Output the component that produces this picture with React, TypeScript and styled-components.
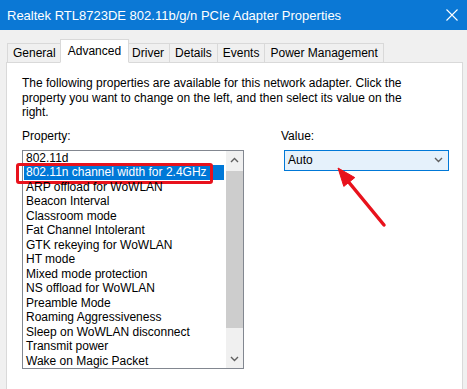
import React from 'react'
import styled, { createGlobalStyle } from 'styled-components'

const GlobalStyle = createGlobalStyle`
    html, body {
        margin: 0;
        padding: 0;
        width: 467px;
        height: 389px;
        overflow: hidden;
        background: #f0f0f0;
    }
    body {
        font-family: "Liberation Sans", Arial, sans-serif;
        color: #000;
    }
`

const Window = styled.div`
    width: 467px;
    height: 389px;
    display: flex;
    flex-direction: column;
    background: #f0f0f0;
    overflow: hidden;
`

const TitleBar = styled.div`
    height: 30px;
    flex-shrink: 0;
    background: #0b78d5;
    color: #fff;
    display: flex;
    align-items: center;
    justify-content: space-between;
    padding: 0 7px 0 7px;
    font-size: 13px;
`

const CloseButton = styled.div`
    width: 14px;
    height: 14px;
    display: flex;
    align-items: center;
    justify-content: center;
    margin-right: 1px;
`

const Body = styled.div`
    flex: 1;
    display: flex;
    flex-direction: column;
    padding: 9px 4px 0 6px;
`

const TabRow = styled.div`
    display: flex;
    align-items: flex-end;
    height: 24px;
    padding-left: 1px;
    position: relative;
    z-index: 1;
    margin-bottom: -1px;
`

const Tab = styled.div<{ $active?: boolean }>`
    font-size: 12px;
    line-height: ${p => (p.$active ? '22px' : '19px')};
    height: ${p => (p.$active ? '24px' : '20px')};
    box-sizing: border-box;
    padding: 0 ${p => (p.$active ? '7px' : '5px')};
    margin: 0 ${p => (p.$active ? '-2px' : '0')};
    background: ${p => (p.$active ? '#fff' : '#f0f0f0')};
    border: 1px solid #d9d9d9;
    border-bottom: ${p => (p.$active ? '1px solid #fff' : '1px solid #d9d9d9')};
    border-left: ${p => (p.$active ? '1px solid #d9d9d9' : 'none')};
    position: relative;
    z-index: ${p => (p.$active ? 2 : 0)};

    &:first-child {
        border-left: 1px solid #d9d9d9;
    }
`

const Panel = styled.div`
    flex: 1;
    position: relative;
    background: #fff;
    border: 1px solid #d9d9d9;
    border-bottom: none;
    padding: 13px 15px 0 15px;
    font-size: 12px;
`

const Description = styled.p`
    margin: 0;
    line-height: 14.5px;
    width: 400px;
`

const Columns = styled.div`
    display: grid;
    grid-template-columns: 222px 168px;
    column-gap: 37px;
    margin-top: 9px;
`

const Label = styled.div`
    line-height: 14px;
    margin-bottom: 7px;
`

const ListBox = styled.div`
    height: 219px;
    box-sizing: border-box;
    border: 1px solid #828790;
    display: flex;
`

const Items = styled.div`
    flex: 1;
    padding: 0 2px 0 1px;
`

const Item = styled.div<{ $selected?: boolean }>`
    position: relative;
    height: 14.5px;
    line-height: 14.5px;
    padding-left: 2px;
    white-space: nowrap;
    background: ${p => (p.$selected ? '#0078d7' : 'transparent')};
    color: ${p => (p.$selected ? '#fff' : '#000')};
`

const Callout = styled.div`
    position: absolute;
    left: -8px;
    top: -2px;
    width: 197px;
    height: 21px;
    box-sizing: border-box;
    border: 3px solid #e8121c;
    border-radius: 3px;
`

const ScrollBar = styled.div`
    width: 17px;
    background: #f0f0f0;
    display: flex;
    flex-direction: column;
`

const ScrollButton = styled.div`
    height: 18px;
    display: flex;
    align-items: center;
    justify-content: center;
`

const Track = styled.div`
    flex: 1;
    padding-top: 2px;
`

const Thumb = styled.div`
    height: 157px;
    background: #cdcdcd;
`

const Combo = styled.div`
    margin-left: 3px;
    height: 21px;
    box-sizing: border-box;
    border: 1px solid #0078d7;
    background: #e5f1fb;
    display: flex;
    align-items: center;
    justify-content: space-between;
    padding: 0 5px 0 3px;
`

const Annotation = styled.svg`
    position: absolute;
    left: 323px;
    top: 97px;
`

const Chevron = ({ up }: { up?: boolean }) => (
    <svg width="9" height="6" viewBox="0 0 9 6">
        <path
            d={up ? 'M1 5 L4.5 1.5 L8 5' : 'M1 1 L4.5 4.5 L8 1'}
            fill="none"
            stroke="#606060"
            strokeWidth="1.4"
        />
    </svg>
)

const properties = [
    '802.11d',
    '802.11n channel width for 2.4GHz',
    'ARP offload for WoWLAN',
    'Beacon Interval',
    'Classroom mode',
    'Fat Channel Intolerant',
    'GTK rekeying for WoWLAN',
    'HT mode',
    'Mixed mode protection',
    'NS offload for WoWLAN',
    'Preamble Mode',
    'Roaming Aggressiveness',
    'Sleep on WoWLAN disconnect',
    'Transmit power',
    'Wake on Magic Packet',
]

const tabs = ['General', 'Advanced', 'Driver', 'Details', 'Events', 'Power Management']

export default function App() {
    return (
        <Window>
            <GlobalStyle />
            <TitleBar>
                <span>Realtek RTL8723DE 802.11b/g/n PCIe Adapter Properties</span>
                <CloseButton>
                    <svg width="12" height="12" viewBox="0 0 12 12">
                        <path d="M0.5 0.5 L11.5 11.5 M11.5 0.5 L0.5 11.5" stroke="#fff" strokeWidth="1.1" />
                    </svg>
                </CloseButton>
            </TitleBar>
            <Body>
                <TabRow>
                    {tabs.map(t => (
                        <Tab key={t} $active={t === 'Advanced'}>{t}</Tab>
                    ))}
                </TabRow>
                <Panel>
                    <Description>
                        The following properties are available for this network adapter. Click the
                        property you want to change on the left, and then select its value on the
                        right.
                    </Description>
                    <Columns>
                        <div>
                            <Label>Property:</Label>
                            <ListBox>
                                <Items>
                                    {properties.map((p, i) => (
                                        <Item key={p} $selected={i === 1}>
                                            {p}
                                            {i === 1 && <Callout />}
                                        </Item>
                                    ))}
                                </Items>
                                <ScrollBar>
                                    <ScrollButton><Chevron up /></ScrollButton>
                                    <Track><Thumb /></Track>
                                    <ScrollButton><Chevron /></ScrollButton>
                                </ScrollBar>
                            </ListBox>
                        </div>
                        <div>
                            <Label>Value:</Label>
                            <Combo>
                                <span>Auto</span>
                                <Chevron />
                            </Combo>
                        </div>
                    </Columns>
                    <Annotation width="60" height="70" viewBox="0 0 60 70">
                        <line x1="17" y1="20" x2="54" y2="65" stroke="#e8121c" strokeWidth="3.5" strokeLinecap="round" />
                        <polygon points="8,8 13.8,26.4 24.8,17.6" fill="#e8121c" stroke="#e8121c" strokeWidth="1" strokeLinejoin="round" />
                    </Annotation>
                </Panel>
            </Body>
        </Window>
    )
}
